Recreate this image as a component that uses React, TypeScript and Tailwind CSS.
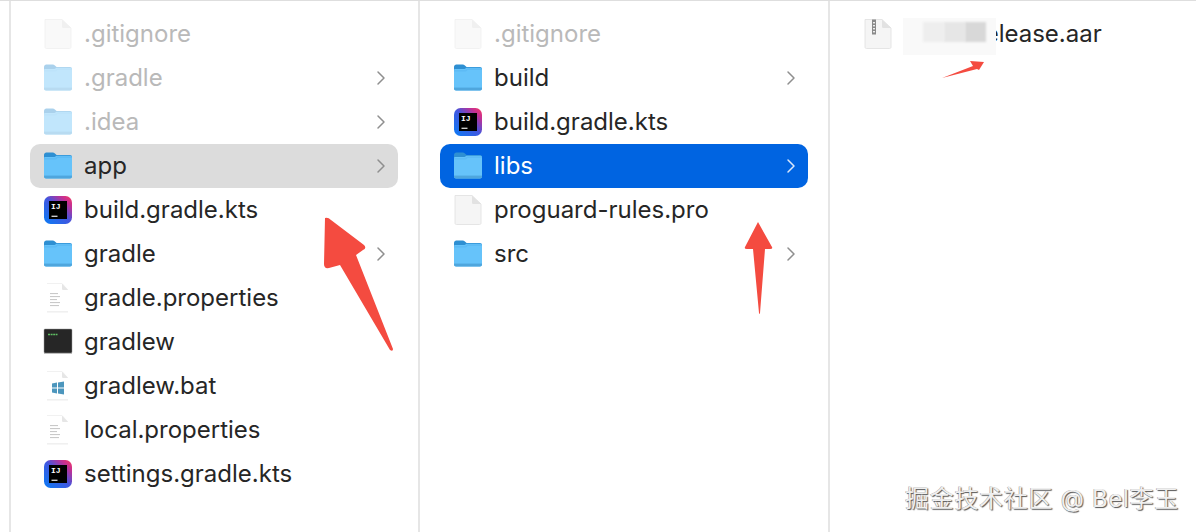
import React from "react";

function Folder({ dim = false }: { dim?: boolean }) {
  return (
    <svg width="30" height="30" viewBox="0 1.5 30 30" className={dim ? "opacity-40" : ""}>
      <path d="M1 5.5C1 4 2 3 3.4 3H9.6c1 0 1.6.3 2.3.9L13.6 5.6H27c1.2 0 2 .8 2 2V12H1z" fill="#2e8fd2" />
      <path d="M1 8.6c0-.7.5-1.200 1.200-1.200h8.400c.7 0 1.200-.1 1.800-.5L13.600 6.200H27.400c.9 0 1.600.7 1.600 1.600V27c0 1.200-.8 2-2 2H3c-1.200 0-2-.8-2-2z" fill="#66c3fa" />
      <path d="M1 8.400h10c1 0 1.700-.2 2.400-.8l1-.9H29V8.600H14.600l-1 .8c-.6.500-1.300.7-2.200.7H1z" fill="#57b6f2" opacity=".6" />
      <rect x="1" y="25.800" width="28" height=".8" fill="#58b2ea" />
      <path d="M1 26.600h28V27c0 1.200-.8 2-2 2H3c-1.200 0-2-.8-2-2z" fill="#4fa6dd" />
    </svg>
  );
}

function Intellij() {
  return (
    <svg width="30" height="30" viewBox="0 0 30 30">
      <defs>
        <linearGradient id="ij" x1="0" y1="1" x2="1" y2="0">
          <stop offset="0" stopColor="#0a7cf5" />
          <stop offset=".5" stopColor="#3f57e0" />
          <stop offset=".8" stopColor="#c32f94" />
          <stop offset="1" stopColor="#fb3a5c" />
        </linearGradient>
      </defs>
      <rect x="1" y="1" width="28" height="28" rx="6.500" fill="url(#ij)" />
      <rect x="6" y="6" width="18" height="18" fill="#000" />
      <text x="8" y="14.300" fontSize="8" fontWeight="700" fill="#fff" fontFamily="'Liberation Mono', monospace">IJ</text>
      <rect x="8.500" y="20.700" width="6" height="1.100" fill="#fff" />
    </svg>
  );
}

function Doc({ kind = "blank", dim = false }: { kind?: "blank" | "text" | "win" | "zip"; dim?: boolean }) {
  const flat = kind === "text" || kind === "win";
  if (flat) {
    return (
      <svg width="30" height="32" viewBox="0 0 30 32">
        <path d="M4 1.500h15L25 8v21.500H4z" fill="#ffffff" />
        <path d="M4 1.500h15L25 8" fill="none" stroke="#eeeeee" strokeWidth=".8" />
        <path d="M19 1.500V6.500c0 1 .5 1.500 1.500 1.500H25z" fill="#e6e6e6" />
        <rect x="4" y="29.500" width="21" height=".8" fill="#e2e2e2" />
        {kind === "text" && (
          <g fill="#c9c9c9">
            <rect x="7" y="11" width="8" height="1.100" />
            <rect x="7" y="14" width="10" height="1.100" />
            <rect x="7" y="17" width="7" height="1.100" />
            <rect x="7" y="20" width="10" height="1.100" />
            <rect x="7" y="23" width="9" height="1.100" />
          </g>
        )}
        {kind === "win" && (
          <g fill="#4c96bd">
            <path d="M9 13.400l5-.8v5H9z" />
            <path d="M15 12.500l6-.9v6H15z" />
            <path d="M9 18.400h5v5l-5-.8z" />
            <path d="M15 18.400h6v6l-6-.9z" />
          </g>
        )}
      </svg>
    );
  }
  return (
    <svg width="30" height="32" viewBox="0 0 30 32" className={dim ? "opacity-50" : ""}>
      <path
        d="M2 1.500h17L28 10v19c0 1-.6 1.500-1.500 1.500h-23C2.600 30.500 2 30 2 29z"
        fill="#f5f5f5"
        stroke="#e0e0e0"
        strokeWidth=".8"
      />
      <path d="M19 1.500V8.500c0 1 .5 1.500 1.500 1.500H28z" fill="#e2e2e2" />
      {kind === "zip" && (
        <g>
          <rect x="9" y="1.500" width="4" height="15" fill="#8a8a8a" />
          <rect x="10" y="4" width="2" height="1.400" fill="#eee" />
          <rect x="10" y="7" width="2" height="1.400" fill="#eee" />
          <rect x="10" y="10" width="2" height="1.400" fill="#eee" />
          <rect x="10" y="13" width="2" height="1.400" fill="#eee" />
        </g>
      )}
    </svg>
  );
}

function Terminal() {
  return (
    <svg width="30" height="30" viewBox="0 0 30 30">
      <rect x="1" y="2" width="28" height="24" rx="1" fill="#262626" />
      <rect x="1" y="2" width="28" height="24" rx="1" fill="none" stroke="#9a9a9a" strokeWidth=".5" />
      <rect x="1" y="26" width="28" height="1" fill="#bdbdbd" />
      <path d="M5 7.500h9.500" stroke="#5fbf63" strokeWidth="1.400" strokeDasharray="2 .6" />
    </svg>
  );
}

function Chevron({ color }: { color: string }) {
  return (
    <svg width="10" height="16" viewBox="0 0 10 16" fill="none" stroke={color} strokeWidth="1.500" strokeLinecap="round" strokeLinejoin="round">
      <path d="M2 2l6 6-6 6" />
    </svg>
  );
}

type Item = { name: string; icon: React.ReactNode; dim?: boolean; chev?: boolean; sel?: "gray" | "blue" };

function Row({ name, icon, dim, chev, sel }: Item) {
  const bg = sel === "gray" ? "bg-[#dcdcdc]" : sel === "blue" ? "bg-[#0064e1]" : "";
  const txt = sel === "blue" ? "text-white" : dim ? "text-[#b9b9b9]" : "text-[#262626]";
  return (
    <div className={`flex h-[44px] items-center rounded-[10px] pl-[13px] pr-[12px] ${bg}`}>
      <div className="flex w-[30px] items-center justify-center">{icon}</div>
      <span className={`ml-[11px] flex-1 text-[24px] leading-none ${txt}`}>{name}</span>
      {chev && <Chevron color={sel === "blue" ? "#dbe8fb" : "#8f8f8f"} />}
    </div>
  );
}

const col1: Item[] = [
  { name: ".gitignore", icon: <Doc dim />, dim: true },
  { name: ".gradle", icon: <Folder dim />, dim: true, chev: true },
  { name: ".idea", icon: <Folder dim />, dim: true, chev: true },
  { name: "app", icon: <Folder />, chev: true, sel: "gray" },
  { name: "build.gradle.kts", icon: <Intellij /> },
  { name: "gradle", icon: <Folder />, chev: true },
  { name: "gradle.properties", icon: <Doc kind="text" /> },
  { name: "gradlew", icon: <Terminal /> },
  { name: "gradlew.bat", icon: <Doc kind="win" /> },
  { name: "local.properties", icon: <Doc kind="text" /> },
  { name: "settings.gradle.kts", icon: <Intellij /> },
];

const col2: Item[] = [
  { name: ".gitignore", icon: <Doc dim />, dim: true },
  { name: "build", icon: <Folder />, chev: true },
  { name: "build.gradle.kts", icon: <Intellij /> },
  { name: "libs", icon: <Folder />, chev: true, sel: "blue" },
  { name: "proguard-rules.pro", icon: <Doc /> },
  { name: "src", icon: <Folder />, chev: true },
];

export default function App() {
  return (
    <div
      className="relative flex h-[532px] w-[1196px] overflow-hidden border-t border-[#dedede] bg-white pl-[9px]"
      style={{ fontFamily: "Inter, 'Noto Sans CJK SC', sans-serif" }}
    >
      <div className="w-[409px] border-l-2 border-[#e6e6e6] pl-[19px] pr-[20px] pt-[11px]">
        {col1.map((it) => (
          <Row key={it.name} {...it} />
        ))}
      </div>
      <div className="w-[410px] border-l-2 border-[#e6e6e6] pl-[20px] pr-[20px] pt-[11px]">
        {col2.map((it) => (
          <Row key={it.name} {...it} />
        ))}
      </div>
      <div className="flex-1 border-l-2 border-[#e6e6e6] pl-[14px] pt-[11px]">
        <div className="flex h-[44px] items-center pl-[19px]">
          <div className="flex w-[30px] items-center justify-center">
            <Doc kind="zip" />
          </div>
          <span className="ml-[83px] text-[24px] leading-none text-[#262626]">release.aar</span>
        </div>
      </div>

      {/* privacy blur over the file name */}
      <div className="absolute left-[903px] top-[17px] h-[37px] w-[93px] bg-[#f9f9f9]" />
      <div className="absolute left-[923px] top-[21px] h-[20px] w-[21px] bg-[#eeeeee] blur-[1px]" />
      <div className="absolute left-[944px] top-[21px] h-[20px] w-[21px] bg-[#e6e6e6] blur-[1px]" />
      <div className="absolute left-[965px] top-[21px] h-[20px] w-[21px] bg-[#d8d8d8] blur-[1px]" />

      {/* hand-drawn arrows */}
      <svg className="absolute left-0 top-[-1px]" width="1196" height="532" viewBox="0 0 1196 532">
        <path
          d="M325 218Q328 217 331 220L364 245Q367 248 363 250L356 255L393 349Q393 352 390 350L340 265L329 268Q324 269 324 264Z"
          fill="#f44b40"
        />
        <path d="M758 222L772 247Q773 249 770 249L765 249L760 313Q759 315 759 313L753 249L747 249Q744 249 745 247Z" fill="#f44b40" />
        <path d="M984 62L970 61L973 66L942 78L977 69L979 70Z" fill="#f44b40" />
      </svg>

      <div className="absolute left-[905px] top-[484px] text-[24px] leading-[28px] tracking-[0.7px] text-[#efefef] [text-shadow:1px_1px_1px_#555,-0.5px_-0.5px_0.5px_#999]">
        掘金技术社区 @ Bel李玉
      </div>
    </div>
  );
}
